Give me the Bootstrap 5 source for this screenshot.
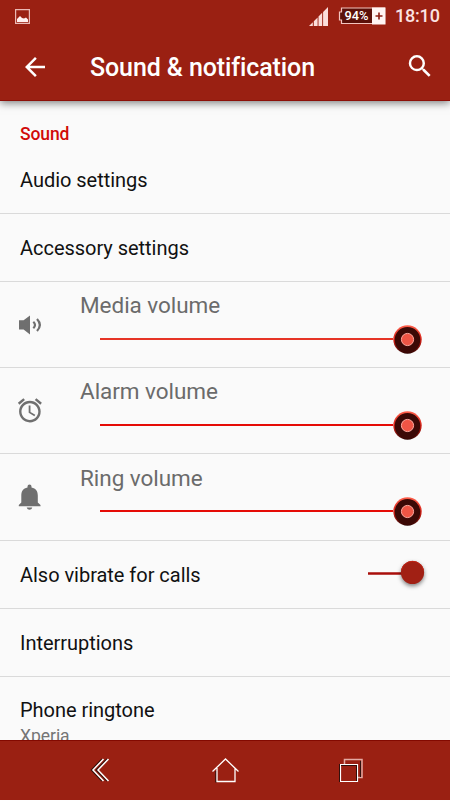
<!DOCTYPE html>
<html lang="en">
<head>
<meta charset="utf-8">
<meta name="viewport" content="width=device-width, initial-scale=1">
<title>Sound &amp; notification</title>
<link href="https://cdn.jsdelivr.net/npm/bootstrap@5.3.0/dist/css/bootstrap.min.css" rel="stylesheet">
<style>
  body { font-family: Roboto, "Liberation Sans", sans-serif; background: #fafafa; color: #111; }
  .screen { width: 450px; height: 800px; }
  .brand-bg { background: #9a2012; color: #fff; }
  .app-head { height: 101px; border-bottom: 1px solid #8c0f08; box-shadow: 0 2px 8px rgba(0,0,0,.5); z-index: 2; }
  .status { height: 32px; padding: 0 10px 0 15px; color: #fbe3e1; }
  .clock { font-size: 18px; font-weight: 500; letter-spacing: -.2px; line-height: 32px; width: 45px; }
  .battery { width: 48px; height: 18px; margin: 0 9px 0 10px; }
  .toolbar { height: 69px; padding: 0 15px 0 20px; }
  .title { font-size: 25px; font-weight: 500; line-height: 68px; margin-left: 40px; padding-top: 2px; letter-spacing: -.1px; }
  .section-name { font-size: 17.5px; font-weight: 500; color: #d10a08; height: 46px; padding: 20px 20px 0; line-height: 26px; letter-spacing: -.1px; }
  .setting { padding: 0 20px; font-size: 20px; height: 68px; border-bottom: 1px solid #dadada; line-height: 30px; letter-spacing: -.03px; }
  .setting-first { height: 67px; }
  .volume { height: 86px; border-bottom: 1px solid #dadada; }
  .volume-last { height: 87px; padding-top: 1px; }
  .volume-icon { width: 80px; padding-left: 15px; }
  .volume-name { font-size: 22.5px; line-height: 30px; color: #6b6b6b; padding-top: 8px; letter-spacing: -.04px; }
  .slider { height: 30px; margin: 4px 28px 0 20px; }
  .volume-last .slider { margin-top: 3px; }
  .track { height: 2px; background: #e50b06; }
  .track-media { background: #e63426; }
  .knob { width: 29px; height: 29px; }
  .toggle { width: 58px; height: 36px; margin: -3px 4px 0 0; }
  .cut { padding: 18px 20px 0; font-size: 20px; line-height: 30px; letter-spacing: -.03px; }
  .summary { font-size: 17.5px; line-height: 22px; color: #757575; }
  .nav-keys { height: 60px; border-top: 1px solid #830900; padding: 0 83px 0 84px; }
  svg { display: block; flex: none; }
</style>
<script src="https://cdn.jsdelivr.net/npm/bootstrap@5.3.0/dist/js/bootstrap.bundle.min.js"></script>
</head>
<body class="overflow-hidden">
<svg width="0" height="0" aria-hidden="true">
  <defs>
    <linearGradient id="rim" x1="0" y1="0" x2="0" y2="1">
      <stop offset="0" stop-color="#ff604c"/><stop offset=".55" stop-color="#d41e15"/><stop offset="1" stop-color="#2b0503"/>
    </linearGradient>
    <symbol id="knob" viewBox="0 0 29 29">
      <circle cx="14.5" cy="14.5" r="14.2" fill="url(#rim)"/>
      <circle cx="14.5" cy="14.7" r="12.8" fill="#3b0906"/>
      <circle cx="14.5" cy="14.5" r="6.1" fill="#ee5545" stroke="#ffaaa0" stroke-width="1"/>
    </symbol>
  </defs>
</svg>
<div class="screen d-flex flex-column overflow-hidden">
  <header class="app-head brand-bg flex-shrink-0 position-relative">
    <div class="status d-flex align-items-center">
      <svg width="15" height="15" viewBox="0 0 15 15"><path d="M.6.6h13.800v13.800H.6z" fill="none" stroke="#eab9b4" stroke-width="1.2"/><path d="M2 13v-3l3-3 2 2 2 .5 2-1 2 2V13z" fill="#fff0ef"/></svg>
      <svg class="ms-auto" width="19" height="19" viewBox="0 0 19 19" fill="#fbdedb"><path d="M0 19L3.800 15.200V19zM4.800 14.200L8.600 10.400V19H4.800zM9.500 9.500L13.200 5.800V19H9.500zM14.100 4.900L19 0V19H14.100z"/></svg>
      <svg class="battery" viewBox="0 0 48 18">
        <path d="M3.500 1H46.500V16.500H3.500V13H1.500V5H3.500z" fill="#5b1009" stroke="#f4c4be" stroke-width="1.2"/>
        <path d="M34 .5h13.500v17H34z" fill="#fff4f3"/><path d="M37.500 9h7M41 5.500v7" stroke="#8c1c12" stroke-width="1.600"/>
        <text x="6.500" y="13" fill="#fff" font-size="12" font-weight="500" textLength="24" lengthAdjust="spacingAndGlyphs">94%</text>
      </svg>
      <span class="clock text-nowrap">18:10</span>
    </div>
    <div class="toolbar d-flex align-items-center">
      <svg width="30" height="30" viewBox="0 0 24 24" fill="#fff"><path d="M20 11H7.830l5.590-5.590L12 4l-8 8 8 8 1.410-1.410L7.830 13H20v-2z"/></svg>
      <h1 class="title mb-0 text-nowrap">Sound &amp; notification</h1>
      <svg class="ms-auto" width="30" height="30" viewBox="0 .6 24 24" fill="#fff"><path d="M15.500 14h-.79l-.28-.27A6.471 6.471 0 0 0 16 9.500 6.500 6.500 0 1 0 9.500 16c1.610 0 3.090-.59 4.230-1.570l.27.28v.79l5 4.990L20.490 19l-4.990-5zm-6 0C7.010 14 5 11.990 5 9.500S7.010 5 9.500 5 14 7.010 14 9.500 11.990 14 9.500 14z"/></svg>
    </div>
  </header>

  <main class="flex-grow-1 overflow-hidden">
    <div class="section-name">Sound</div>
    <div class="setting setting-first d-flex align-items-center">Audio settings</div>
    <div class="setting d-flex align-items-center">Accessory settings</div>

    <div class="volume d-flex align-items-center">
      <div class="volume-icon"><svg width="30" height="30" viewBox="0 0 30 30" fill="#6f6f6f"><path d="M4 10.300h4.600L15 5.500v19L8.600 19.500H4z"/><path d="M18.300 11.800q3.400 3.200 0 6.400M22 9q5.700 6 0 12" fill="none" stroke="#6f6f6f" stroke-width="2.200"/></svg></div>
      <div class="flex-grow-1 align-self-start">
        <div class="volume-name">Media volume</div>
        <div class="slider d-flex align-items-center"><div class="track track-media flex-grow-1"></div><svg class="knob"><use href="#knob"/></svg></div>
      </div>
    </div>
    <div class="volume d-flex align-items-center">
      <div class="volume-icon"><svg width="30" height="30" viewBox="-.4 0 25 25" fill="#6f6f6f"><path d="M22 5.720l-4.600-3.860-1.290 1.530 4.600 3.860L22 5.720zM7.880 3.390L6.600 1.860 2 5.710l1.290 1.530 4.590-3.850zM12.500 8H11v6l4.750 2.850.75-1.230-4-2.370V8zM12 4c-4.970 0-9 4.030-9 9s4.020 9 9 9a9 9 0 0 0 0-18zm0 16c-3.870 0-7-3.130-7-7s3.130-7 7-7 7 3.130 7 7-3.130 7-7 7z"/></svg></div>
      <div class="flex-grow-1 align-self-start">
        <div class="volume-name">Alarm volume</div>
        <div class="slider d-flex align-items-center"><div class="track flex-grow-1"></div><svg class="knob"><use href="#knob"/></svg></div>
      </div>
    </div>
    <div class="volume volume-last d-flex align-items-center">
      <div class="volume-icon"><svg width="30" height="30" viewBox="1 1 30 30" fill="#6f6f6f"><path d="M13.500 4.500a2 2 0 0 1 4 0v1c4.400.9 6.300 3.800 6.300 8v7l2.700 2.500v1.200H4.800V23l2.500-2.500v-7c0-4.200 1.800-7.100 6.200-8zM12.700 25.400h5.600q-.5 2.400-2.800 2.400t-2.800-2.400z"/></svg></div>
      <div class="flex-grow-1 align-self-start">
        <div class="volume-name">Ring volume</div>
        <div class="slider d-flex align-items-center"><div class="track flex-grow-1"></div><svg class="knob"><use href="#knob"/></svg></div>
      </div>
    </div>

    <div class="setting d-flex align-items-center justify-content-between">
      <span>Also vibrate for calls</span>
      <svg class="toggle overflow-visible" viewBox="0 0 58 36">
        <path d="M0 18.500h36" stroke="#a90e0a" stroke-width="2.500"/>
        <circle cx="44.500" cy="17.500" r="11.600" fill="#a12014" filter="drop-shadow(0 2px 2px rgba(0,0,0,.5))"/>
        <path d="M33.500 15a11.300 11.300 0 0 1 22 0" fill="none" stroke="#c32214" stroke-width="1"/>
      </svg>
    </div>
    <div class="setting d-flex align-items-center">Interruptions</div>
    <div class="cut">Phone ringtone<div class="summary">Xperia</div></div>
  </main>

  <nav class="nav-keys brand-bg d-flex align-items-center justify-content-between flex-shrink-0" aria-label="System">
    <svg width="32" height="30" viewBox="0 1 32 30" fill="none"><path d="M18 4L7.500 15 18 26M23 4L12.500 15 23 26" stroke="#30100c" stroke-width="1.500"/><path d="M19.500 4L9 15 19.500 26M24.500 4L14 15 24.500 26" stroke="#fff" stroke-width="1.500"/></svg>
    <svg width="32" height="30" viewBox="0 0 32 30" fill="none"><path d="M6 15v11.500" stroke="#30100c" stroke-width="1.500"/><path d="M2.500 15.500L15.500 3l13 12.500M7 12v13.500h18V12" stroke="#fff" stroke-width="1.300"/></svg>
    <svg width="32" height="30" viewBox="0 0 32 30" fill="none"><path d="M9.500 8V3.500h17.500v18H23" stroke="#e4aaa4" stroke-width="1.500"/><path d="M25.500 5v16" stroke="#30100c"/><path d="M5.500 8.500h17V25.500h-17z" fill="#9a2012" stroke="#fff" stroke-width="1.200"/><path d="M4.500 8v18M6 9.500h16M21.500 9v16" stroke="#30100c"/></svg>
  </nav>
</div>
</body>
</html>
